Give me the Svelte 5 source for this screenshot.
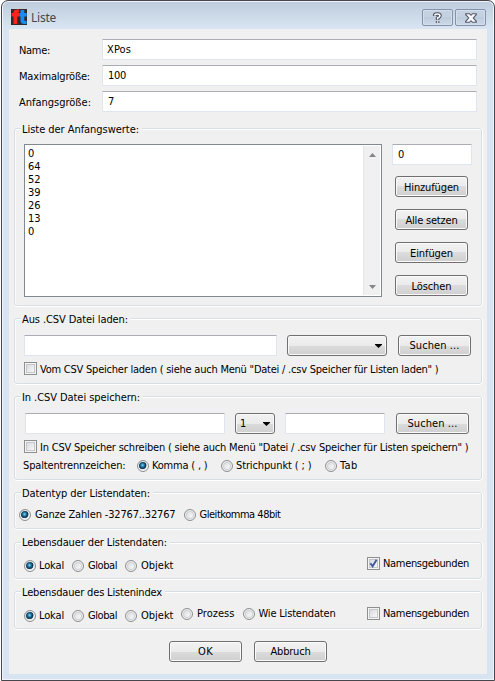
<script>
  // Spreads a label's letters so that it takes exactly `width` pixels.
  function fit(node, width) {
    const natural = node.getBoundingClientRect().width;
    node.style.letterSpacing = (width - natural) / node.textContent.length + 'px';
  }
  const fields = [
    { label: 'Name:', w: 31, value: 'XPos', vw: 24, pad: 4 },
    { label: 'Maximalgröße:', w: 71, value: '100', vw: 18, pad: 5 },
    { label: 'Anfangsgröße:', w: 72, value: '7', vw: 6, pad: 5 }
  ];
  const values = ['0', '64', '52', '39', '26', '13', '0'];
  const actions = [['Hinzufügen', 55], ['Alle setzen', 52], ['Einfügen', 43], ['Löschen', 40]];
</script>

{#snippet text(s, w)}<span class="text" use:fit={w}>{s}</span>{/snippet}
{#snippet button(s, w)}<button class="btn">{@render text(s, w)}</button>{/snippet}
{#snippet legend(s, w)}<div class="legend">{@render text(s, w)}</div>{/snippet}
{#snippet arrow()}
  <svg class="arrow" width="7" height="4" viewBox="0 0 7 4"><path d="M0 0H7V.7L3.5 4L0 .7Z" fill="#000" /></svg>
{/snippet}
{#snippet radio(s, w, on)}
  <span class="radio" class:on><i></i>{@render text(s, w)}</span>
{/snippet}
{#snippet check(s, w, on)}
  <span class="check"><i>
    {#if on}<svg width="9" height="9" viewBox="0 0 9 9"><path d="M1.4 4.2L3.6 7.3L7.6 .8" fill="none" stroke="#4358a0" stroke-width="1.9" /></svg>{/if}
  </i>{@render text(s, w)}</span>
{/snippet}

<div class="screen">
  <div class="window">
    <header>
      <svg class="logo" width="16" height="16" viewBox="0 0 16 16">
        <rect width="16" height="16" fill="#33292b" />
        <path d="M2.500 15V7.500H.5V4H2.500V3.500Q2.500 .5 6 .5H8V3.500H7Q6.300 3.500 6.300 4H8V7.500H6.300V15Z" fill="#fb2222" />
        <path d="M9.500 1H13.300V4H15.700V7.500H13.300V11Q13.300 12 14.200 12H15.700V15H13.500Q9.500 15 9.500 11.500V7.500H8.300V4H9.500Z" fill="#168cf5" />
      </svg>
      <span class="title">{@render text('Liste', 25)}</span>
      <div class="caption">
        <button aria-label="Hilfe">
          <svg width="11" height="12" viewBox="0 0 11 12"><path d="M2.700 4V3.500Q2.700 2 5.300 2T8 3.700Q8 4.800 5.600 6V8M5.600 9V11" fill="none" stroke="#4b5060" stroke-width="3.600" /><path d="M2.700 3.600Q2.900 2 5.300 2T8 3.700Q8 4.800 5.600 6V7.400M5.600 9.300V10.700" fill="none" stroke="#fff" stroke-width="1.600" /></svg>
        </button>
        <button aria-label="Schließen">
          <svg width="12" height="10" viewBox="0 0 12 10"><path d="M.7 .7H4.500L6 2.300L7.500 .7H11.300V1.700L8.300 5L11.300 8.300V9.300H7.500L6 7.700L4.500 9.300H.7V8.300L3.700 5L.7 1.700Z" fill="#f8f9fc" stroke="#53586a" stroke-width="1.100" /></svg>
        </button>
      </div>
    </header>

    <main>
      <div class="fields">
        {#each fields as f}
          <div class="field">
            <label>{@render text(f.label, f.w)}</label>
            <div class="input" style:padding-left="{f.pad}px">{@render text(f.value, f.vw)}</div>
          </div>
        {/each}
      </div>

      <section class="start">
        {@render legend('Liste der Anfangswerte:', 117)}
        <div class="list">
          <div class="items">
            {#each values as v}<div>{@render text(v, v.length * 6.2)}</div>{/each}
          </div>
          <div class="scroll">
            <svg width="7" height="4" viewBox="0 0 7 4"><path d="M0 4L3.500 0L7 4Z" fill="#858585" /></svg>
            <svg width="7" height="4" viewBox="0 0 7 4"><path d="M0 0L3.500 4L7 0Z" fill="#858585" /></svg>
          </div>
        </div>
        <div class="side">
          <div class="input">{@render text('0', 6)}</div>
          <div class="stack">
            {#each actions as [s, w]}{@render button(s, w)}{/each}
          </div>
        </div>
      </section>

      <section class="load">
        {@render legend('Aus .CSV Datei laden:', 106)}
        <div class="files">
          <div class="input"></div>
          <div class="combo">{@render arrow()}</div>
          {@render button('Suchen ...', 50)}
        </div>
        {@render check('Vom CSV Speicher laden ( siehe auch Menü "Datei / .csv Speicher für Listen laden" )', 398.5, false)}
      </section>

      <section class="save">
        {@render legend('In .CSV Datei speichern:', 118)}
        <div class="files">
          <div class="input wide"></div>
          <div class="combo">{@render text('1', 6)}{@render arrow()}</div>
          <div class="input"></div>
          {@render button('Suchen ...', 50)}
        </div>
        {@render check('In CSV Speicher schreiben ( siehe auch Menü "Datei / .csv Speicher für Listen speichern" )', 428.5, false)}
        <div class="separators">
          <span class="caption-text">{@render text('Spaltentrennzeichen:', 102.5)}</span>
          {@render radio('Komma ( , )', 55.5, true)}
          {@render radio('Strichpunkt ( ; )', 75.5, false)}
          {@render radio('Tab', 17.5, false)}
        </div>
      </section>

      <section class="type">
        {@render legend('Datentyp der Listendaten:', 128)}
        <div class="options">
          {@render radio('Ganze Zahlen -32767..32767', 140.5, true)}
          {@render radio('Gleitkomma 48bit', 81, false)}
        </div>
      </section>

      <section class="life">
        {@render legend('Lebensdauer der Listendaten:', 145)}
        <div class="options">
          {@render radio('Lokal', 25, true)}
          {@render radio('Global', 29, false)}
          {@render radio('Objekt', 32.5, false)}
        </div>
        {@render check('Namensgebunden', 86, true)}
      </section>

      <section class="life index">
        {@render legend('Lebensdauer des Listenindex', 140)}
        <div class="options">
          {@render radio('Lokal', 25, true)}
          {@render radio('Global', 29, false)}
          {@render radio('Objekt', 32.5, false)}
        </div>
        <div class="options more">
          {@render radio('Prozess', 37.5, false)}
          {@render radio('Wie Listendaten', 77, false)}
        </div>
        {@render check('Namensgebunden', 86, false)}
      </section>

      <footer>
        {@render button('OK', 15)}
        {@render button('Abbruch', 40)}
      </footer>
    </main>
  </div>
</div>

<style>
  :global(body) { background: #fff; }
  * { box-sizing: border-box; }
  .screen {
    width: 495px; height: 681px; padding-left: 1px; overflow: hidden; background: #fff;
    font: 11px/13px "DejaVu Sans Condensed", "DejaVu Sans", sans-serif;
    font-stretch: condensed; color: #000;
  }
  .window {
    height: 681px; width: 494px; padding: 0 7px 6px 6px; border: 1px solid #46464c;
    border-radius: 7px 7px 0 0; box-shadow: inset 0 0 0 1px #eff5fb;
    background: linear-gradient(#bdccdc, #d9e5f2 28px, #d8e4f1 29px);
  }
  .text { display: inline-block; white-space: pre; }
  button { font: inherit; color: inherit; padding: 0; margin: 0; }
  header { height: 28px; display: flex; padding: 8px 1px 0 3px; }
  .title { margin: 2px 0 0 4px; color: #44484e; font: 12px/14px "Noto Sans", sans-serif; }
  .caption { margin-left: auto; display: flex; gap: 2px; }
  .caption button {
    width: 31px; height: 17px; display: flex; align-items: center; justify-content: center;
    border: 1px solid #8492ad; border-radius: 2px; box-shadow: inset 0 0 0 1px #d4dfeb;
    background: linear-gradient(#c3d1e0, #c3d1e0 50%, #bccbdc 50%, #ccd9e7);
  }
  main { height: 645px; margin-left: 1px; width: 478px; background: #f0f0f0; padding: 10px 4px 0 5px; }
  .fields { display: flex; flex-direction: column; gap: 5px; height: 89px; }
  .field { display: flex; height: 21px; padding-left: 5px; }
  .field label { width: 83px; padding-top: 5px; }
  .field .input { width: 375px; }
  .input {
    height: 21px; flex: none; background: #fff; border: 1px solid #dfe4ee;
    border-top-color: #abadb3; border-radius: 1px; padding: 3px 0 0 4px;
  }
  section {
    position: relative; border: 1px solid #d5dfe5; border-radius: 3px;
    box-shadow: inset 0 1px #fff, inset 1px 0 #fafafa, 0 1px #fff, 1px 0 #fff;
    width: 468px;
  }
  .legend { position: absolute; left: 6px; top: -6px; padding: 0 3px 0 1px; background: #f0f0f0; height: 14px; line-height: 13px; }
  .btn {
    width: 73px; height: 21px; flex: none; border: 1px solid #707070; border-radius: 3px; text-align: center;
    box-shadow: inset 0 0 0 1px #fafafa; background: linear-gradient(#f2f2f2, #ebebeb 50%, #dcdcdc 50%, #cfcfcf);
  }
  .stack .btn { padding-top: 1px; }
  .combo {
    height: 21px; display: flex; align-items: center; border: 1px solid #707070; border-radius: 3px; padding: 0 4px;
    box-shadow: inset 0 0 0 1px #f8f8f8; background: linear-gradient(#f2f2f2, #ebebeb 50%, #dcdcdc 50%, #cfcfcf);
  }
  .arrow { margin-left: auto; }
  .start { height: 178px; display: flex; padding: 15px 0 0 9px; }
  .list { width: 358px; height: 153px; border: 1px solid #828790; background: #fff; display: flex; padding: 1px; }
  .items { width: 338px; padding: 1px 0 0 2px; }
  .scroll {
    width: 17px; background: #f0f0f0; display: flex; flex-direction: column; align-items: center;
    justify-content: space-between; padding: 7px 0 6px; border-left: 1px solid #e6e6e6;
  }
  .side { margin-left: 10px; }
  .side .input { width: 80px; padding-left: 5px; }
  .stack { margin: 11px 0 0 3px; display: flex; flex-direction: column; gap: 12px; }
  .load { margin-top: 12px; height: 66px; padding: 16px 0 0 9px; }
  .files { display: flex; }
  .load .input { width: 253px; }
  .load .combo { width: 100px; margin: 0 11px 0 10px; }
  .check { display: flex; }
  .check i {
    width: 13px; height: 13px; flex: none; border: 1px solid #8e8f8f; margin-right: 3px; display: flex; align-items: center; justify-content: center;
    box-shadow: inset 0 0 0 1px #f4f4f4, inset 0 0 0 2px #c3c7ca; background: linear-gradient(135deg, #cdd2d8, #f5f5f5 75%);
  }
  .load > .check, .save > .check { margin-top: 6px; }
  .load .check .text, .save .check .text { margin-top: 1px; }
  .save { margin-top: 12px; height: 84px; padding: 16px 0 0 9px; }
  .save .input { width: 100px; margin-right: 11px; }
  .save .files { padding-left: 1px; }
  .save .input.wide { width: 200px; margin-right: 10px; }
  .save .combo { width: 40px; margin-right: 10px; }
  .separators { display: flex; margin: 5px 0 0 -1px; }
  .caption-text { margin-right: 11.5px; }
  .radio { display: flex; align-items: center; height: 13px; }
  .radio i {
    width: 12px; height: 12px; flex: none; border: 1px solid #8e8f8f; border-radius: 50%; margin-right: 3px;
    box-shadow: inset 0 0 0 1px #f4f4f4, inset 0 0 0 2px #cdd0d3; background: linear-gradient(135deg, #d0d4d8, #f8f8f8 75%);
  }
  .radio.on i { background: radial-gradient(circle at 45% 42%, #8fdcf5 0, #2587b3 1.5px, #123b5a 3px, #24465e 3.700px, #e6ebee 4.300px); box-shadow: inset 0 0 0 1px #f4f4f4; }
  .separators .radio + .radio { margin-left: 13.5px; }
  .type { margin-top: 12px; height: 37px; padding: 15px 0 0 4px; }
  .options { display: flex; gap: 9px; }
  .type .options .radio i { margin-right: 4px; }
  .type .options { gap: 8px; }
  .life { margin-top: 13px; height: 37px; padding: 14px 0 0 9px; display: flex; }
  .life .legend { top: -7px; }
  .life.index { margin-top: 12px; height: 38px; padding-top: 15px; }
  .life.index .legend { top: -6px; }
  .life .options { gap: 8px; padding-top: 2px; }
  .life .radio + .radio i { margin-right: 4px; }
  .life > .check { margin-left: auto; margin-right: 12px; }
  .options.more { margin-left: 7.5px; }
  .life .options.more { padding-top: 0; }
  .life .more .radio i { margin-right: 4px; }
  footer { margin-top: 12px; padding-left: 155px; display: flex; gap: 12px; }
</style>
